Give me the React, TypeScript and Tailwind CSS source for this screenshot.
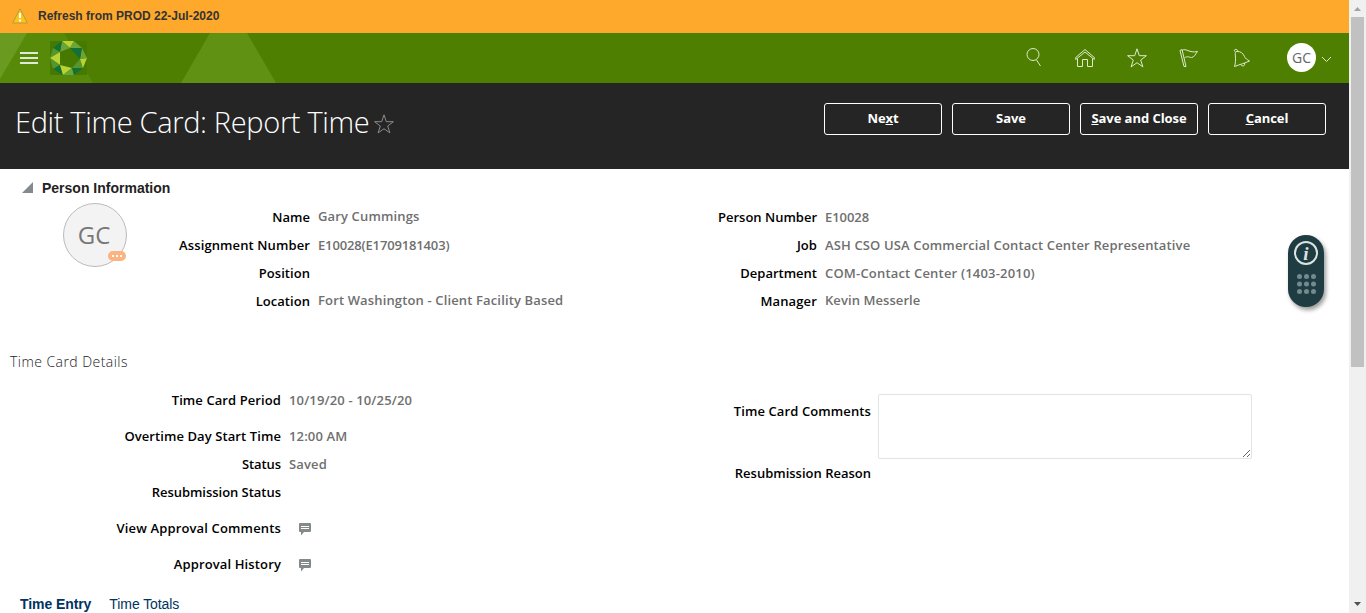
import React from "react";

const SEMI = "font-['Open_Sans','Noto_Sans',sans-serif] font-semibold text-[13px] leading-5 whitespace-nowrap";

function Row({ label, value, h, ls = "tracking-[0.14px]", w, lls = "tracking-[0.05px]" }: { label: string; value?: React.ReactNode; h: string; ls?: string; lls?: string; w: string }) {
  return (
    <div className={`flex ${h} ${SEMI}`}>
      <div className={`${w} text-right text-black ${lls}`}>{label}</div>
      <div className={`ml-2 text-[#6f6f6f] ${ls}`}>{value}</div>
    </div>
  );
}

function Button({ children }: { children: React.ReactNode }) {
  return (
    <button className={`h-8 w-[118px] rounded-[3px] border border-white pb-0.5 text-center font-['Open_Sans','Noto_Sans',sans-serif] text-[13px] leading-5 font-bold tracking-[-0.05px] whitespace-nowrap text-white`}>
      {children}
    </button>
  );
}

function Comment() {
  return (
    <svg className="mt-[5px] ml-2.5" width="12" height="13" viewBox="0 0 12 13">
      <path d="M1 0h10a1 1 0 0 1 1 1v7a1 1 0 0 1-1 1H5l-3 3.500V9H1a1 1 0 0 1-1-1V1a1 1 0 0 1 1-1z" fill="#84898b" />
      <path d="M2 3.500h8M2 5.500h8" stroke="#fff" />
    </svg>
  );
}

function Logo() {
  return (
    <svg className="ml-3" width="37" height="34" viewBox="0 0 37 34">
      <path d="M0 0h37v34H0z" fill="#467900" />
      <path d="M12 0h12l-4 7z" fill="#b9d432" />
      <path d="M24 0l-4 7 12 0z" fill="#6ba539" />
      <path d="M12 0l8 7-10 4z" fill="#6ba539" />
      <path d="M3 7l9-7-2 11z" fill="#137136" />
      <path d="M3 7l7 4-10 6z" fill="#56962f" />
      <path d="M0 17L10 11v13z" fill="#b9d432" />
      <path d="M0 17l10 7-7 4z" fill="#56962f" />
      <path d="M3 28l7-4 3 10z" fill="#137136" />
      <path d="M10 24l12 3-9 7z" fill="#b9d432" />
      <path d="M22 27l2 7H13z" fill="#6ba539" />
      <path d="M22 27l11 0-9 7z" fill="#137136" />
      <path d="M30 18l3 9-11 0z" fill="#56962f" />
      <path d="M37 17l-4 10-3-9z" fill="#b9d432" />
      <path d="M32 7l5 10-7 1z" fill="#6ba539" />
      <path d="M20 7h12l-2 11z" fill="#137136" />
    </svg>
  );
}

function Star({ className, size, color }: { className: string; size: number; color: string }) {
  return (
    <svg className={className} width={size} height={size} viewBox="0 0 20 20" fill="none" stroke={color} strokeWidth="1">
      <path d="M10 .8l2.300 6.900h7.100l-5.700 4.300 2.200 6.900-5.900-4.200-5.900 4.200L6.300 12 .6 7.700h7.100z" />
    </svg>
  );
}

function Header() {
  return (
    <header className="relative flex h-[50px] items-center bg-[#4f7f00]">
      <svg className="absolute inset-0" width="300" height="50">
        <path d="M0 0h64l29 50H0z" fill="#588a0a" />
        <path d="M0 0h27L0 46z" fill="#6b9a20" />
        <path d="M210 0h37l29 50h-95z" fill="#609113" />
      </svg>
      <div className="relative flex w-full items-center pl-5">
        <svg width="18" height="12" stroke="#e1ead5" strokeWidth="2"><path d="M0 1h18M0 6h18M0 11h18" /></svg>
        <Logo />
        <div className="ml-auto flex items-center pb-px text-[#dfe9cf]">
          <svg className="mr-[32px]" width="18" height="20" fill="none" stroke="currentColor"><circle cx="8" cy="6.500" r="6" /><path d="M11.500 12l4 6" /></svg>
          <svg className="mr-[32px]" width="20" height="20" fill="none" stroke="currentColor"><path d="M.7 9.500L10 1.500l9.300 8v2L10 4 .7 11.500zM2.500 10.500v8h5v-7h5v7h5v-8" /></svg>
          <Star className="mr-[32px]" size={20} color="currentColor" />
          <svg className="mr-[33px]" width="20" height="20" fill="none" stroke="currentColor"><path d="M1 2.500l2-1 4 17h-2zM3 2.500c4-3 7 3 15.500 1-2 2-3 6-6 6-2 0-4-2-7 .5" /></svg>
          <svg className="mr-[35px]" width="20" height="20" fill="none" stroke="currentColor"><path d="M2.500 18.500c1-3 1.300-7 .8-11.500-.2-2 .2-3.500 1.700-3.500 3.500-.2 6 1.500 7.500 5 .8 2 2.500 3 5 4.500-4 2-10 3.500-15 5.500zM3.500 4c-2-1-1-3 .5-2.500 1.500 0 2 1 1.500 2M8.500 16.500c2 2.500 5 1.500 4-1.500" /></svg>
          <div className="grid size-[29px] place-items-center rounded-full bg-white font-['Open_Sans',sans-serif] text-[14px] text-[#666]">GC</div>
          <svg className="mt-1 mr-[17px] ml-[5px]" width="11" height="7" fill="none" stroke="currentColor"><path d="M1 1l4.500 4.500L10 1" /></svg>
        </div>
      </div>
    </header>
  );
}

function Scrollbar() {
  return (
    <div className="flex h-[613px] w-[17px] flex-col items-center bg-[#f0f0f0]">
      <svg width="17" height="17"><path d="M5 11l3.500-4 3.500 4z" fill="#a3a3a3" /></svg>
      <div className="h-[350px] w-[13px] bg-[#c1c1c1]" />
      <svg className="mt-auto" width="17" height="17"><path d="M5 6h7l-3.500 4z" fill="#505050" /></svg>
    </div>
  );
}

export default function App() {
  return (
    <div className="relative flex h-[613px] w-[1366px] overflow-hidden bg-white">
      <div className="w-[1349px]">
        <div className="flex h-[33px] items-center bg-[#ffa92c] pl-3">
          <svg className="mb-0.5" width="16" height="16" viewBox="0 0 16 16"><path d="M8 .8L15.300 15H.7z" fill="#fac51e" stroke="#b99a35" strokeLinejoin="round" /><path d="M8 5v5M8 11.500v2" stroke="#fff" strokeWidth="2" /></svg>
          <span className="ml-2.5 pb-0.5 font-['Liberation_Sans',sans-serif] text-[12px] font-bold text-[#333]">Refresh from PROD 22-Jul-2020</span>
        </div>
        <Header />
        <section className="flex h-[86px] bg-[#252525] pt-5 pl-[15px]">
          <h1 className="font-['Open_Sans',sans-serif] text-[29px] leading-[38px] font-light tracking-[-0.34px] whitespace-nowrap text-white">Edit Time Card: Report Time</h1>
          <Star className="mt-[11px] ml-[5px]" size={20} color="#8b8b8b" />
          <div className="mr-[23px] ml-auto flex gap-2.5">
            <Button>Ne<u>x</u>t</Button><Button>Save</Button><Button><u>S</u>ave and Close</Button><Button><u>C</u>ancel</Button>
          </div>
        </section>
        <main>
          <div className="flex h-[34px] items-center pt-1 pl-[22px]">
            <svg className="mb-0.5" width="11" height="11"><path d="M11 0v11H0z" fill="#84898b" /></svg>
            <h2 className="ml-[9px] font-['Liberation_Sans',sans-serif] text-[14px] font-bold text-[#222]">Person Information</h2>
          </div>
          <div className="flex h-[149px]">
            <div className="relative ml-[63px] grid size-16 place-items-center rounded-full border border-[#bbb] bg-[#f3f3f3] font-['Open_Sans',sans-serif] text-[24px] text-[#777]">
              <span className="-ml-0.5">GC</span>
              <div className="absolute right-0 bottom-[5px] flex h-[10px] w-[18px] items-center justify-center gap-[2px] rounded-full bg-[#fbb480]">
                <i className="size-[2px] bg-white" /><i className="size-[2px] bg-white" /><i className="size-[2px] bg-white" />
              </div>
            </div>
            <div className="w-[483px] pt-1">
              <Row w="w-[183px]" h="h-7" label="Name" value={<span className="-mt-px block">Gary Cummings</span>} />
              <Row w="w-[183px]" h="h-7" label="Assignment Number" lls="tracking-[0.11px]" value="E10028(E1709181403)" ls="tracking-[-0.15px]" />
              <Row w="w-[183px]" h="h-7" label="Position" />
              <Row w="w-[183px]" h="h-7" label="Location" value={<span className="-mt-px block">Fort Washington - Client Facility Based</span>} />
            </div>
            <div className="pt-1">
              <Row w="w-[207px]" h="h-7" label="Person Number" lls="tracking-[0px]" value="E10028" ls="tracking-[-0.05px]" />
              <Row w="w-[207px]" h="h-7" label="Job" value="ASH CSO USA Commercial Contact Center Representative" />
              <Row w="w-[207px]" h="h-7" label="Department" lls="tracking-[0px]" value="COM-Contact Center (1403-2010)" ls="tracking-[0.19px]" />
              <Row w="w-[207px]" h="h-7" label="Manager" lls="tracking-[0.14px]" value={<span className="-mt-px block">Kevin Messerle</span>} ls="tracking-[0.07px]" />
            </div>
          </div>
          <h2 className="h-[38px] pl-2.5 font-['Open_Sans',sans-serif] text-[14px] leading-5 font-light tracking-[0.45px] text-[#222]">Time Card Details</h2>
          <div className="flex h-[204px]">
            <div className="w-[590px]">
              <Row w="w-[281px]" h="h-9" label="Time Card Period" lls="tracking-[0.09px]" value="10/19/20 - 10/25/20" />
              <Row w="w-[281px]" h="h-7" label="Overtime Day Start Time" lls="tracking-[0.09px]" value="12:00 AM" />
              <Row w="w-[281px]" h="h-7" label="Status" lls="tracking-[-0.1px]" value="Saved" />
              <Row w="w-[281px]" h="h-9" label="Resubmission Status" lls="tracking-[-0.03px]" />
              <Row w="w-[281px]" h="h-9" label="View Approval Comments" lls="tracking-[0.15px]" value={<Comment />} />
              <Row w="w-[281px]" h="h-9" label="Approval History" lls="tracking-[0.13px]" value={<Comment />} />
            </div>
            <div className={`${SEMI} pt-[4px]`}>
              <div className="flex h-[69px]">
                <div className="w-[281px] pt-[7px] text-right tracking-[0.11px]">Time Card Comments</div>
                <textarea className="ml-[7px] h-[65px] w-[374px] resize rounded-[2px] border border-[#dfe4e7]" />
              </div>
              <div className="w-[281px] text-right">Resubmission Reason</div>
            </div>
          </div>
          <div className="flex gap-[18px] pl-5 font-['Liberation_Sans',sans-serif] text-[14px] leading-5 tracking-[-0.08px] text-[#003461]"><b>Time Entry</b><span>Time Totals</span></div>
        </main>
      </div>
      <Scrollbar />
      <div className="absolute top-[235px] left-[1288px] flex h-[72px] w-9 flex-col items-center rounded-full bg-[#1e3c41] pt-1.5 shadow-[2px_3px_4px_rgba(0,0,0,0.4)]">
        <div className="grid size-6 place-items-center rounded-full border-2 border-[#dce3e3] font-['Liberation_Serif',serif] text-[19px] leading-none font-bold text-[#dce3e3] italic">i</div>
        <svg className="mt-[9px]" width="19" height="20" fill="#738b8f">
          {[2.5, 10, 17.5].map((y) => [2.5, 9.5, 16.5].map((x) => <circle key={`${x}-${y}`} cx={x} cy={y} r="2.500" />))}
        </svg>
      </div>
    </div>
  );
}
